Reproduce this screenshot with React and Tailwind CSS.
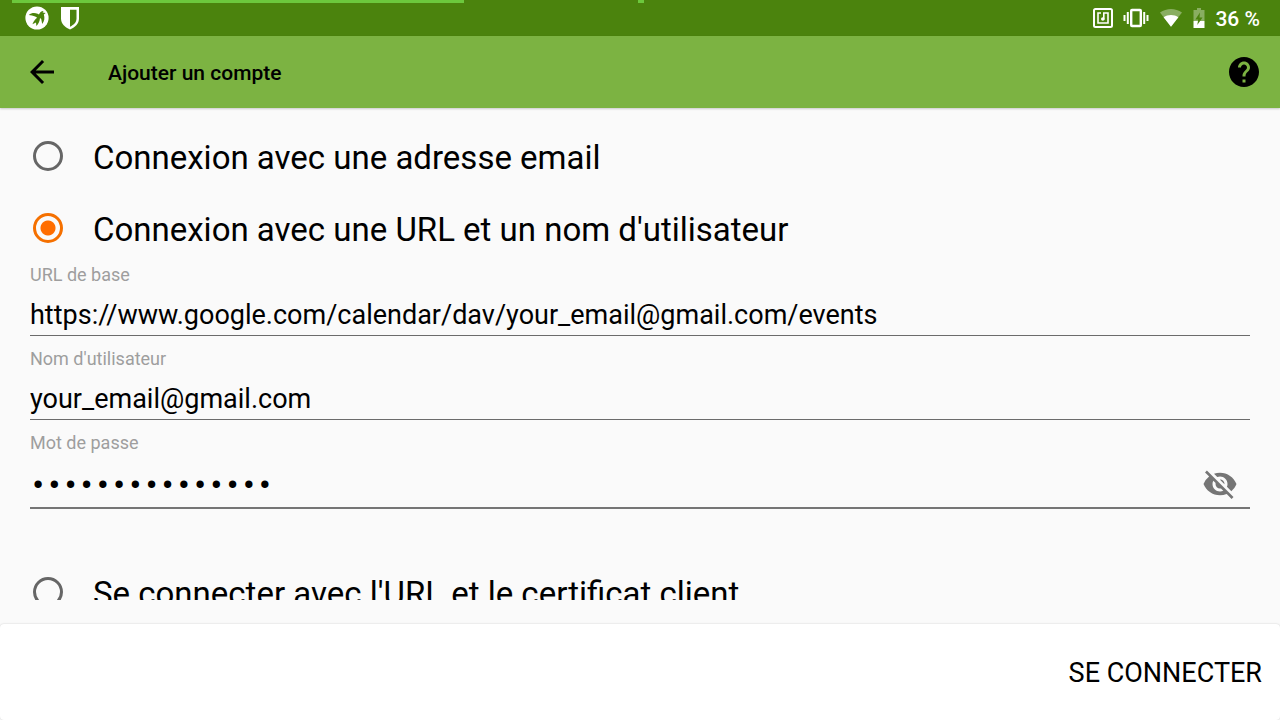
import { useState } from "react";
import { MdArrowBack, MdHelp, MdVisibility, MdVisibilityOff } from "react-icons/md";

function BirdIcon() {
  return (
    <svg viewBox="0 0 24 24" className="size-6" aria-hidden="true">
      <circle cx="12" cy="12" r="11.6" fill="#fff" />
      <path
        d="M3.8 9C6.500 6.600 9.800 6.500 12.600 7.800L14 8.600C14.600 6.600 16.200 5.200 18.600 5L17.600 6.400L20.600 7L18.800 8.600C20 12 19.400 15.200 17.200 18L16.200 13L15 12C14.800 15 13.600 17.800 11.400 20L11 16.600L7.400 18.200C8.800 15 10.400 13 12.200 11.800L10.200 10.400C8 9.600 6 9.200 3.800 9Z"
        fill="#4b830d"
      />
    </svg>
  );
}

function ShieldIcon() {
  return (
    <svg viewBox="0 0 20 24" className="h-6 w-5" aria-hidden="true">
      <path d="M1 1H19V12.500C19 17.500 15.500 21.200 10 23.500C4.500 21.200 1 17.500 1 12.500Z" fill="#fff" />
      <path d="M10 3.800H16.500V12.500C16.500 16 14 18.800 10 20.700Z" fill="#4b830d" />
    </svg>
  );
}

function NfcIcon() {
  return (
    <svg viewBox="0 0 20 20" className="size-5" fill="none" stroke="#fff" aria-hidden="true">
      <rect x="1" y="1" width="18" height="18" rx="1.500" strokeWidth="2" />
      <path d="M8 5H5V15H15V5H10.800V11H8.500" strokeWidth="1.600" />
      <circle cx="9.800" cy="11" r="1.700" fill="#fff" stroke="none" />
    </svg>
  );
}

function VibrateIcon() {
  return (
    <svg viewBox="0 0 26 20" className="h-5 w-[26px]" fill="none" stroke="#fff" aria-hidden="true">
      <rect x="8.200" y="2" width="9.600" height="16" rx="0.800" strokeWidth="2.400" />
      <path d="M4.800 4V16M21.200 4V16" strokeWidth="2" />
      <path d="M1.500 7V13M24.500 7V13" strokeWidth="2" />
    </svg>
  );
}

function WifiIcon() {
  return (
    <svg viewBox="0 0 24 20" className="h-5 w-6" aria-hidden="true">
      <path d="M1 4.500C7.500 -0.200 16.500 -0.200 23 4.500L12 18.800Z" fill="#fff" opacity="0.35" />
      <path d="M4.600 9.200C9 6.200 15 6.200 19.400 9.200L12 18.800Z" fill="#fff" />
    </svg>
  );
}

function BatteryIcon() {
  return (
    <svg viewBox="0 0 12 20" className="h-5 w-3" aria-hidden="true">
      <path d="M4 0H8V2H11.500V13H0.500V2H4Z" fill="#fff" opacity="0.35" />
      <path d="M0.500 13H11.500V20H0.500Z" fill="#fff" />
      <path d="M7 4.500L2.300 11.500H5.200L4.300 17L9.500 9.500H6.500Z" fill="#4b830d" />
    </svg>
  );
}

function StatusBar() {
  return (
    <div className="relative flex h-9 shrink-0 items-center justify-between bg-[#4b830d] pl-[25px] pr-5">
      <div className="absolute left-3 top-0 h-[3px] w-[452px] bg-[#6cc83c]" />
      <div className="absolute left-[638px] top-0 h-[3px] w-1.5 bg-[#6cc83c]" />
      <div className="flex items-center gap-[11px]">
        <BirdIcon />
        <ShieldIcon />
      </div>
      <div className="flex items-center gap-2.5 text-white">
        <NfcIcon />
        <VibrateIcon />
        <WifiIcon />
        <BatteryIcon />
        <span className="pt-0.5 text-[21px] leading-9 font-medium">36 %</span>
      </div>
    </div>
  );
}

function LoginOption({ value, label, selected, onSelect }) {
  return (
    <label className="flex h-[72px] items-center gap-[30px] pl-[3px]">
      <input
        type="radio"
        name="login-type"
        value={value}
        checked={selected === value}
        onChange={() => onSelect(value)}
        className="size-[30px] shrink-0 appearance-none rounded-full border-3 border-[#666666] checked:border-[#f57000] checked:bg-[radial-gradient(circle,#ff6d00_7px,transparent_8px)]"
      />
      <span className="pt-1 text-[33px] leading-10 whitespace-nowrap">{label}</span>
    </label>
  );
}

function Field({ id, label, children }) {
  return (
    <div className="flex flex-col">
      <label htmlFor={id} className="text-lg leading-[22px] text-[#9e9e9e]">
        {label}
      </label>
      {children}
    </div>
  );
}

const inputClass =
  "h-[50px] w-full border-b border-[#6b6b6b] bg-transparent pt-2 text-[27px] text-black outline-none";

export default function App() {
  const [mode, setMode] = useState("url");
  const [baseUrl, setBaseUrl] = useState("https://www.google.com/calendar/dav/your_email@gmail.com/events");
  const [user, setUser] = useState("your_email@gmail.com");
  const [password, setPassword] = useState("motdepassesecre");
  const [visible, setVisible] = useState(false);

  return (
    <div className="flex h-screen flex-col bg-[#fafafa] font-['Roboto',sans-serif] text-black">
      <StatusBar />
      <header className="z-10 flex h-[72px] shrink-0 items-center bg-[#7cb342] pl-6 pr-[18px] shadow-[0_1px_2px_rgba(0,0,0,0.2)]">
        <button type="button" aria-label="Retour">
          <MdArrowBack className="size-9" />
        </button>
        <h1 className="ml-12 flex-1 pt-1 text-[21px] font-medium">Ajouter un compte</h1>
        <button type="button" aria-label="Aide">
          <MdHelp className="size-9" />
        </button>
      </header>

      <main className="mb-6 min-h-0 flex-1 overflow-y-auto px-[30px] pt-3 [scrollbar-width:none]">
        <form id="login">
          <LoginOption value="email" label="Connexion avec une adresse email" selected={mode} onSelect={setMode} />
          <LoginOption
            value="url"
            label="Connexion avec une URL et un nom d'utilisateur"
            selected={mode}
            onSelect={setMode}
          />
          <div className="mb-[47px] flex flex-col gap-3">
            <Field id="base-url" label="URL de base">
              <input
                id="base-url"
                type="text"
                value={baseUrl}
                onChange={(e) => setBaseUrl(e.target.value)}
                className={inputClass}
              />
            </Field>
            <Field id="user-name" label="Nom d'utilisateur">
              <input
                id="user-name"
                type="text"
                value={user}
                onChange={(e) => setUser(e.target.value)}
                className={inputClass}
              />
            </Field>
            <Field id="password" label="Mot de passe">
              <div className="flex h-[55px] items-center border-b-2 border-[#757575] pr-3">
                <input
                  id="password"
                  type={visible ? "text" : "password"}
                  value={password}
                  onChange={(e) => setPassword(e.target.value)}
                  className="h-full min-w-0 flex-1 bg-transparent pt-2.5 font-['Liberation_Mono',monospace] text-[27px] text-black outline-none"
                />
                <button
                  type="button"
                  aria-label="Afficher le mot de passe"
                  onClick={() => setVisible(!visible)}
                  className="pt-1.5 text-[#757575]"
                >
                  {visible ? <MdVisibility className="size-9" /> : <MdVisibilityOff className="size-9" />}
                </button>
              </div>
            </Field>
          </div>
          <LoginOption
            value="certificate"
            label="Se connecter avec l'URL et le certificat client"
            selected={mode}
            onSelect={setMode}
          />
        </form>
      </main>

      <footer className="flex h-24 shrink-0 items-center justify-end rounded-sm bg-white pt-0.5 pr-[18px] shadow-[0_0_2px_rgba(0,0,0,0.2)]">
        <button type="submit" form="login" className="text-[27px] uppercase">
          Se connecter
        </button>
      </footer>
    </div>
  );
}
